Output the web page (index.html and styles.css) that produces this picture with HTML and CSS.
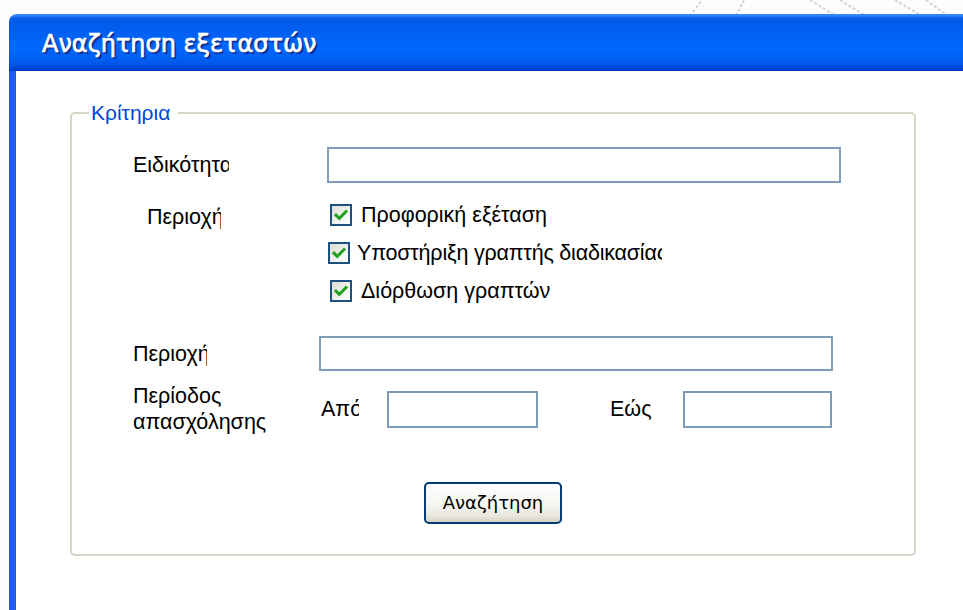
FILE: index.html
```html
<!DOCTYPE html>
<html lang="el">
<head>
<meta charset="utf-8">
<title>Αναζήτηση εξεταστών</title>
<link rel="stylesheet" href="styles.css">
</head>
<body>
<div class="desk">
  <svg class="wallpaper" width="260" height="16" viewBox="0 0 260 16" aria-hidden="true">
    <g fill="none" stroke="#d4d4d4" stroke-width="2" stroke-dasharray="3 2">
      <path d="M0 16 L12 0"/>
      <path d="M46 16 L54 0"/>
      <path d="M120 0 L146 16"/>
      <path d="M150 0 L176 16"/>
      <path d="M205 0 L232 16"/>
      <path d="M236 0 L258 16"/>
    </g>
  </svg>
  <div class="window">
    <div class="titlebar">
      <h1 class="title">Αναζήτηση εξεταστών</h1>
    </div>
    <div class="window-body">
      <fieldset class="criteria">
        <legend class="criteria-legend">Κρίτηρια</legend>

        <div class="row row-specialty">
          <span class="lbl lbl-specialty">Ειδικότητα</span>
          <input class="field field-specialty" type="text">
        </div>

        <div class="row row-exams">
          <span class="lbl lbl-exams">Περιοχή</span>
          <div class="checks">
            <label class="check">
              <span class="box"><svg viewBox="0 0 16 16" width="16" height="16"><path d="M3 8.2 L6.3 11.4 L13 4.6" fill="none" stroke="#21a121" stroke-width="3" stroke-linecap="square"/></svg></span>
              <span class="check-text">Προφορική εξέταση</span>
            </label>
            <label class="check check-shifted">
              <span class="box"><svg viewBox="0 0 16 16" width="16" height="16"><path d="M3 8.2 L6.3 11.4 L13 4.6" fill="none" stroke="#21a121" stroke-width="3" stroke-linecap="square"/></svg></span>
              <span class="check-text check-text-long">Υποστήριξη γραπτής διαδικασίας</span>
            </label>
            <label class="check">
              <span class="box"><svg viewBox="0 0 16 16" width="16" height="16"><path d="M3 8.2 L6.3 11.4 L13 4.6" fill="none" stroke="#21a121" stroke-width="3" stroke-linecap="square"/></svg></span>
              <span class="check-text">Διόρθωση γραπτών</span>
            </label>
          </div>
        </div>

        <div class="row row-area">
          <span class="lbl lbl-area">Περιοχή</span>
          <input class="field field-area" type="text">
        </div>

        <div class="row row-period">
          <span class="lbl lbl-period">Περίοδος<br>απασχόλησης</span>
          <span class="lbl lbl-from">Από</span>
          <input class="field field-date" type="text">
          <span class="lbl lbl-to">Εώς</span>
          <input class="field field-date field-date-to" type="text">
        </div>

        <div class="actions">
          <button class="btn" type="button">Αναζήτηση</button>
        </div>
      </fieldset>
    </div>
  </div>
</div>
</body>
</html>
```

FILE: styles.css
```css
* {
  box-sizing: border-box;
}

html,
body {
  margin: 0;
  padding: 0;
  height: 100%;
  overflow: hidden;
  background: #fdfdfd;
}

body {
  font-family: "Liberation Sans", Arial, sans-serif;
  color: #000;
}

.desk {
  position: relative;
  height: 100%;
  padding: 14px 0 0 9px;
}

/* faint pattern of the desktop peeking over the window's top edge */
.wallpaper {
  position: absolute;
  top: 0;
  left: 690px;
}

.window {
  position: relative;
  height: 100%;
  display: flex;
  flex-direction: column;
  border-radius: 8px 0 0 0;
  overflow: hidden;
}

/* ---------- title bar ---------- */
.titlebar {
  height: 57px;
  flex: none;
  display: flex;
  align-items: center;
  padding-left: 33px;
  background: linear-gradient(to bottom,
    #3a8df5 0px, #2d7ef5 2px, #0a5fee 4px, #005ae8 8px,
    #0062f6 22px, #0068ff 32px, #0060f4 44px,
    #0256e8 51px, #0046d8 54px, #003ccc 57px);
}

.title {
  margin: 0;
  font-family: "DejaVu Sans", Verdana, sans-serif;
  font-size: 24px;
  font-weight: normal;
  line-height: 28px;
  color: #fff;
  -webkit-text-stroke: 0.7px #fff;
  text-shadow: 1px 1px 0 #0a1870, 2px 2px 1px rgba(0, 20, 100, 0.6);
  padding-top: 2px;
}

/* ---------- body ---------- */
.window-body {
  flex: 1;
  background: #fff;
  border-left: 7px solid #0d44e4;
  border-image: linear-gradient(to right, #1e5cf5, #0a3fe0 40%, #0833c8) 1;
  padding: 31px 0 0 54px;
}

.criteria {
  width: 846px;
  height: 454px;
  margin: 0;
  padding: 0;
  border: 2px solid #d6d6c6;
  border-radius: 5px;
}

.criteria-legend {
  margin-left: 17px;
  padding: 0 8px 0 2px;
  color: #0046d5;
  font-size: 21px;
  line-height: 22px;
}

/* ---------- form rows ---------- */
.row {
  display: flex;
  align-items: center;
}

.lbl {
  font-size: 21.5px;
  line-height: 26px;
  white-space: nowrap;
  overflow: hidden;
  flex: none;
}

.field {
  flex: none;
  height: 36px;
  border: 2px solid #7f9db9;
  background: #fff;
  padding: 0 4px;
  font: inherit;
}

.row-specialty {
  margin-top: 23px;
}

.lbl-specialty {
  margin-left: 61px;
  width: 96px;
}

.field-specialty {
  margin-left: 98px;
  width: 514px;
}

.row-exams {
  margin-top: 21px;
  align-items: flex-start;
}

.lbl-exams {
  margin-left: 75px;
  width: 74px;
  margin-top: 0;
}

.checks {
  margin-left: 109px;
  display: flex;
  flex-direction: column;
  gap: 16px;
}

.check {
  display: flex;
  align-items: center;
  gap: 9px;
  height: 22px;
}

.check-shifted {
  margin-left: -2px;
  gap: 7px;
}

.box {
  flex: none;
  width: 22px;
  height: 22px;
  border: 2px solid #1c5180;
  background: linear-gradient(135deg, #dcdcd4, #f4f4f0 60%, #ffffff);
  display: flex;
  align-items: center;
  justify-content: center;
}

.check-text {
  font-size: 21.5px;
  line-height: 26px;
  white-space: nowrap;
  overflow: hidden;
}

.check-text-long {
  width: 305px;
  letter-spacing: -0.2px;
}

.row-area {
  margin-top: 34px;
}

.lbl-area {
  margin-left: 61px;
  width: 74px;
}

.field-area {
  margin-left: 112px;
  width: 514px;
  height: 35px;
}

.row-period {
  margin-top: 12px;
}

.lbl-period {
  margin-left: 61px;
  width: 188px;
}

.lbl-from {
  width: 38px;
}

.field-date {
  margin-left: 28px;
  width: 151px;
  height: 37px;
}

.lbl-to {
  width: 44px;
  margin-left: 72px;
}

.field-date-to {
  margin-left: 29px;
  width: 149px;
}

/* ---------- search button ---------- */
.actions {
  display: flex;
  justify-content: center;
  margin-top: 47px;
}

.btn {
  width: 138px;
  height: 42px;
  border: 2px solid #003c74;
  border-radius: 5px;
  background: linear-gradient(to bottom, #ffffff 0%, #f4f4f0 55%, #e8e6dc 85%, #d6d0c0 100%);
  font-family: "DejaVu Sans", Verdana, sans-serif;
  font-size: 18px;
  color: #000;
  padding: 0 0 2px;
}
```
